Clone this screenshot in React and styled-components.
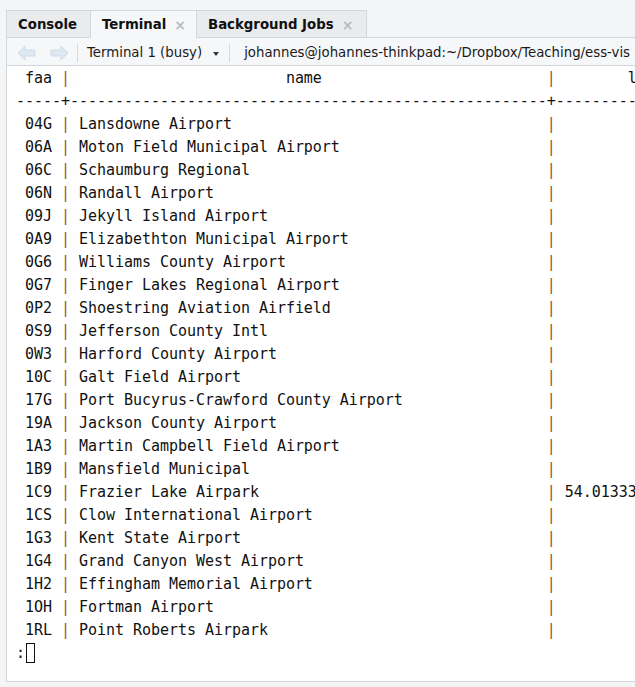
import React from "react";
import styled, { createGlobalStyle } from "styled-components";

const Global = createGlobalStyle`
  html, body { margin: 0; padding: 0; background: #f4f5f6; }
  body { width: 635px; height: 687px; overflow: hidden; font-family: "DejaVu Sans", sans-serif; }
`;

const Page = styled.div`
  padding: 10px 0 0 6px;
  height: 687px;
  box-sizing: border-box;
`;

const Panel = styled.div`
  width: 640px;
  height: 672px;
  box-sizing: border-box;
  display: flex;
  flex-direction: column;
  border-left: 1px solid #d3d7dc;
  border-bottom: 1px solid #d3d7dc;
  background: #ffffff;
  overflow: hidden;
`;

const TabBar = styled.div`
  display: flex;
  height: 28px;
  flex: none;
  background: #f4f5f6;
  box-shadow: inset 0 -1px 0 #d3d7dc;
`;

const Tab = styled.div`
  display: flex;
  align-items: center;
  gap: 8px;
  padding: 0 10px 0 11px;
  box-sizing: border-box;
  width: ${p => p.$w}px;
  border-top: 1px solid #d3d7dc;
  border-right: 1px solid #d3d7dc;
  background: ${p => (p.$active ? "#f6f7f9" : "#eaebed")};
  box-shadow: ${p => (p.$active ? "none" : "inset 0 -1px 0 #d3d7dc")};
  font-weight: bold;
  font-size: 13.3px;
  color: #111;
`;

const Close = styled.span`
  color: #b8bcc0;
  font-size: 14px;
  font-weight: bold;
  line-height: 1;
`;

const Toolbar = styled.div`
  display: flex;
  align-items: center;
  height: 28px;
  box-sizing: border-box;
  padding: 2px 0 0 10px;
  flex: none;
  background: #f6f7f9;
  border-bottom: 1px solid #d3d7dc;
  font-size: 13.3px;
  color: #1a1a1a;
  white-space: nowrap;
`;

const ArrowBtn = styled.span`
  display: inline-flex;
  width: 20px;
  height: 16px;
  margin-right: ${p => p.$mr}px;
`;

const Sep = styled.span`
  width: 1px;
  height: 18px;
  background: #d6dadf;
  margin: 0 ${p => p.$r}px 0 ${p => p.$l}px;
`;

const Caret = styled.span`
  display: inline-block;
  width: 0;
  height: 0;
  border-left: 3.5px solid transparent;
  border-right: 3.5px solid transparent;
  border-top: 4px solid #333;
  margin-left: 11px;
  margin-top: 2px;
`;

const Term = styled.div`
  flex: 1;
  background: #fff;
  font-family: "DejaVu Sans Mono", monospace;
  font-size: 15px;
  letter-spacing: -0.035px;
  line-height: 23px;
  color: #111;
  padding: 1px 0 0 9px;
  white-space: pre;
  overflow: hidden;
`;

const Line = styled.div`
  height: 23px;
`;

const Pipe = styled.span`
  color: #9a5426;
`;

const Cursor = styled.span`
  display: inline-block;
  width: 7px;
  height: 18px;
  border: 1px solid #111;
  vertical-align: -5px;
  margin-left: 1px;
`;

const Arrow = ({ dir }) => (
  <svg width="20" height="16" viewBox="0 0 20 16">
    <path
      d={dir === "left" ? "M1 8 L8 1 L8 5 L18 5 L18 11 L8 11 L8 15 Z" : "M19 8 L12 1 L12 5 L2 5 L2 11 L12 11 L12 15 Z"}
      fill="#dde8f2"
      stroke="#cfdde9"
      strokeWidth="1"
    />
  </svg>
);

const rows = [
  ["04G", "Lansdowne Airport"],
  ["06A", "Moton Field Municipal Airport"],
  ["06C", "Schaumburg Regional"],
  ["06N", "Randall Airport"],
  ["09J", "Jekyll Island Airport"],
  ["0A9", "Elizabethton Municipal Airport"],
  ["0G6", "Williams County Airport"],
  ["0G7", "Finger Lakes Regional Airport"],
  ["0P2", "Shoestring Aviation Airfield"],
  ["0S9", "Jefferson County Intl"],
  ["0W3", "Harford County Airport"],
  ["10C", "Galt Field Airport"],
  ["17G", "Port Bucyrus-Crawford County Airport"],
  ["19A", "Jackson County Airport"],
  ["1A3", "Martin Campbell Field Airport"],
  ["1B9", "Mansfield Municipal"],
  ["1C9", "Frazier Lake Airpark", "54.01333"],
  ["1CS", "Clow International Airport"],
  ["1G3", "Kent State Airport"],
  ["1G4", "Grand Canyon West Airport"],
  ["1H2", "Effingham Memorial Airport"],
  ["1OH", "Fortman Airport"],
  ["1RL", "Point Roberts Airpark"],
];

const pad = (s, n) => s + " ".repeat(Math.max(0, n - s.length));

export default function App() {
  return (
    <>
      <Global />
      <Page>
        <Panel>
          <TabBar>
            <Tab $w={84}>Console</Tab>
            <Tab $active $w={106}>
              Terminal <Close>×</Close>
            </Tab>
            <Tab $w={170}>
              Background Jobs <Close>×</Close>
            </Tab>
          </TabBar>
          <Toolbar>
            <ArrowBtn $mr={12}><Arrow dir="left" /></ArrowBtn>
            <ArrowBtn $mr={0}><Arrow dir="right" /></ArrowBtn>
            <Sep $l={8} $r={9} />
            <span>Terminal 1 (busy)</span>
            <Caret />
            <Sep $l={10} $r={14} />
            <span>johannes@johannes-thinkpad:~/Dropbox/Teaching/ess-vis</span>
          </Toolbar>
          <Term>
            <Line>
              {" faa "}
              <Pipe>|</Pipe>
              {pad("", 24) + "name" + pad("", 25)}
              <Pipe>|</Pipe>
              {pad("", 8) + "lat"}
            </Line>
            <Line>{"-----+" + "-".repeat(53) + "+" + "-".repeat(20)}</Line>
            {rows.map(([code, name, lat]) => (
              <Line key={code}>
                {" " + code + " "}
                <Pipe>|</Pipe>
                {" " + pad(name, 52)}
                <Pipe>|</Pipe>
                {lat ? " " + lat : ""}
              </Line>
            ))}
            <Line>
              {":"}
              <Cursor />
            </Line>
          </Term>
        </Panel>
      </Page>
    </>
  );
}
